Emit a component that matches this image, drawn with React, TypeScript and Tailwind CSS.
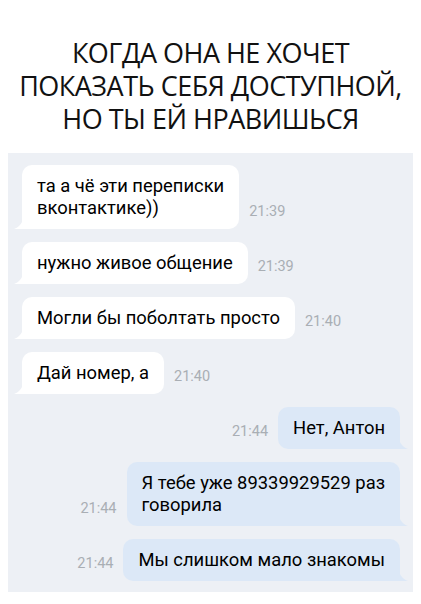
const incoming = [
  { lines: ['та а чё эти переписки', 'вконтактике))'], time: '21:39' },
  { lines: ['нужно живое общение'], time: '21:39' },
  { lines: ['Могли бы поболтать просто'], time: '21:40' },
  { lines: ['Дай номер, а'], time: '21:40' },
];

const outgoing = [
  { lines: ['Нет, Антон'], time: '21:44' },
  { lines: ['Я тебе уже 89339929529 раз', 'говорила'], time: '21:44' },
  { lines: ['Мы слишком мало знакомы'], time: '21:44' },
];

const Time = ({ value }: { value: string }) => (
  <span className="pb-[9px] text-[14.5px] leading-[16px] text-[#a9aeb4]">{value}</span>
);

const Bubble = ({ lines, out }: { lines: string[]; out?: boolean }) => (
  <div
    className={
      out
        ? 'relative rounded-[10px] rounded-br-none bg-[#dce8f7] px-[15px] py-[10px] text-[18.4px] leading-[22px] text-black'
        : 'relative rounded-[10px] rounded-bl-none bg-white px-[15px] py-[10px] text-[18.4px] leading-[22px] text-black'
    }
  >
    {lines.map((l) => (
      <div key={l} className="whitespace-nowrap">
        {l}
      </div>
    ))}
    <svg
      width="9"
      height="12"
      viewBox="0 0 9 12"
      className={out ? 'absolute -right-[8px] bottom-0' : 'absolute -left-[8px] bottom-0'}
    >
      {out ? (
        <path d="M0 0 C0 6 4 10 9 12 L0 12 Z" fill="#dce8f7" />
      ) : (
        <path d="M9 0 C9 6 5 10 0 12 L9 12 Z" fill="#ffffff" />
      )}
    </svg>
  </div>
);

export default function App() {
  return (
    <div className="h-[604px] w-[421px] bg-white">
      <h1 className="pt-[36px] text-center font-['Open_Sans',sans-serif] text-[27px] tracking-[-0.5px] text-[#111]">
        <div className="h-[33px] leading-[33px]">КОГДА ОНА НЕ ХОЧЕТ</div>
        <div className="h-[33px] leading-[33px]">ПОКАЗАТЬ СЕБЯ ДОСТУПНОЙ,</div>
        <div className="h-[33px] leading-[33px]">НО ТЫ ЕЙ НРАВИШЬСЯ</div>
      </h1>

      <div className="mx-[8px] mt-[18px] flex h-[439px] flex-col gap-[13px] bg-[#edf0f5] pt-[12px] pl-[14px] pr-[13px] font-['Roboto',sans-serif]">
        {incoming.map((m, i) => (
          <div key={i} className="flex items-end gap-[10px]">
            <Bubble lines={m.lines} />
            <Time value={m.time} />
          </div>
        ))}
        {outgoing.map((m, i) => (
          <div key={i} className="flex items-end justify-end gap-[10px]">
            <Time value={m.time} />
            <Bubble lines={m.lines} out />
          </div>
        ))}
      </div>
    </div>
  );
}
